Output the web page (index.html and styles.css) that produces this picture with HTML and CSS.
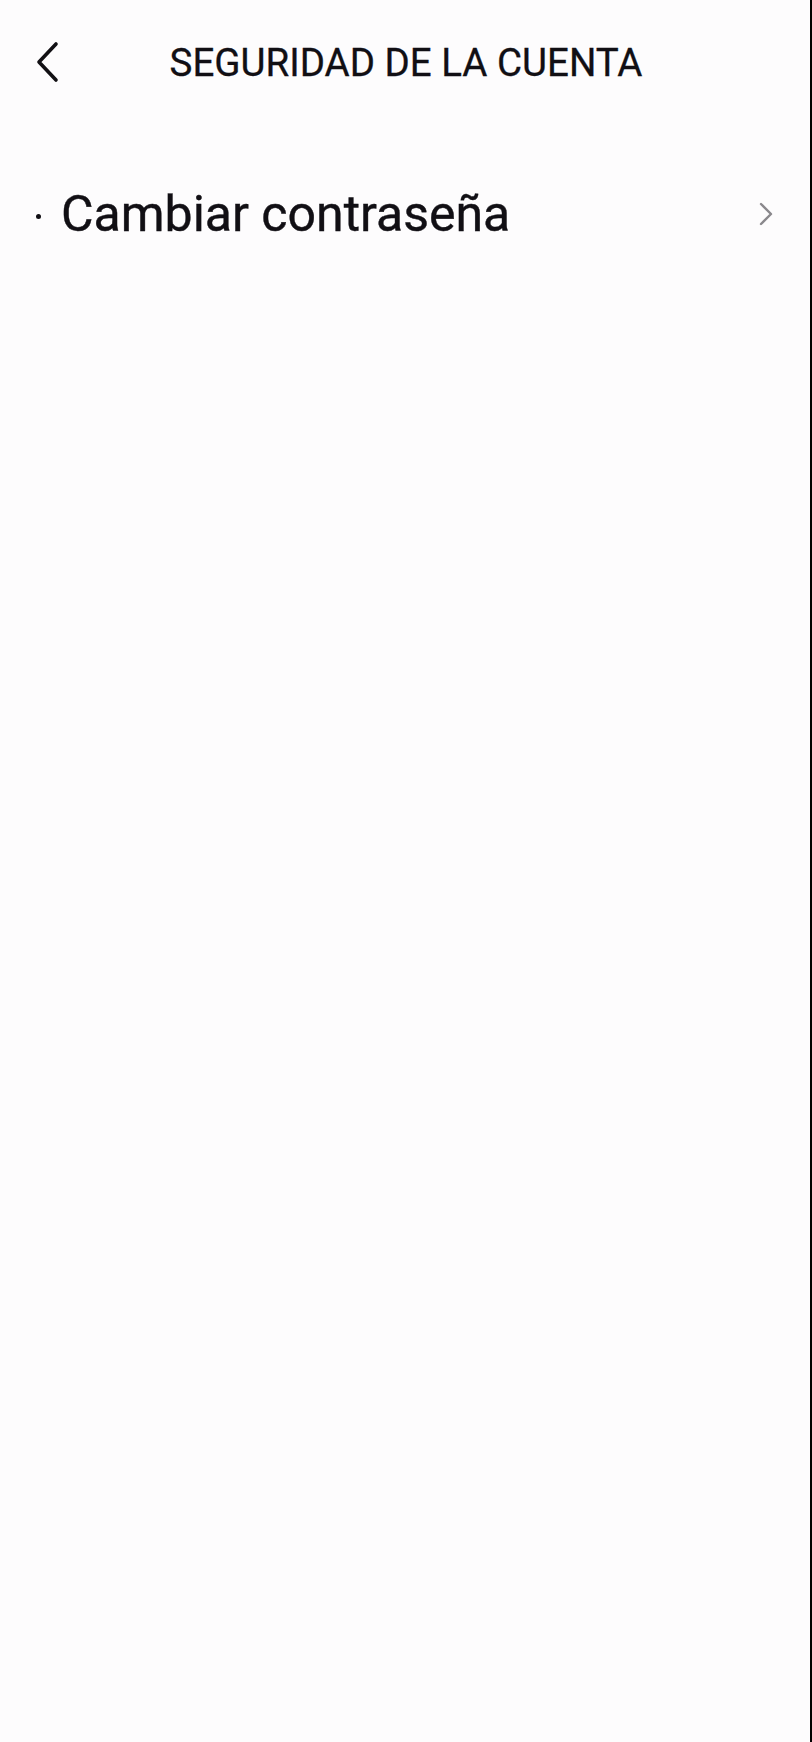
FILE: index.html
```html
<!DOCTYPE html>
<html lang="es">
<head>
<meta charset="utf-8">
<title>Seguridad de la cuenta</title>
<link rel="stylesheet" href="styles.css">
</head>
<body>
<div class="screen">
  <header class="topbar">
    <button class="back" aria-label="Atrás">
      <svg width="40" height="44" viewBox="0 0 40 44"><path d="M29 4 L12 22 L29 40" fill="none" stroke="#121014" stroke-width="3.6" stroke-linecap="round" stroke-linejoin="round"/></svg>
    </button>
    <h1 class="title">SEGURIDAD DE LA CUENTA</h1>
  </header>
  <ul class="menu">
    <li class="item">
      <span class="dot"></span>
      <span class="label">Cambiar contraseña</span>
      <svg class="chev" width="20" height="28" viewBox="0 0 20 28"><path d="M5 4 L15 14 L5 24" fill="none" stroke="#8a888c" stroke-width="2.4" stroke-linecap="round" stroke-linejoin="round"/></svg>
    </li>
  </ul>
</div>
</body>
</html>
```
FILE: styles.css
```css
* { box-sizing: border-box; }
html, body { margin: 0; padding: 0; }
body {
  background: #fdfcfd;
  font-family: Roboto, "Liberation Sans", sans-serif;
  color: #110f14;
}
.screen {
  width: 812px;
  min-height: 1742px;
  border-right: 2px solid #000;
  background: #fdfcfd;
}
.topbar {
  position: relative;
  height: 124px;
  display: flex;
  align-items: center;
  justify-content: center;
}
.back {
  position: absolute;
  left: 27px;
  top: 40px;
  width: 40px;
  height: 44px;
  padding: 0;
  border: 0;
  background: none;
}
.back svg { display: block; }
.title {
  margin: 0;
  font-size: 38.5px;
  font-weight: 400;
  letter-spacing: 0;
  padding-left: 2px;
  -webkit-text-stroke: 0.3px #110f14;
}
.menu {
  list-style: none;
  margin: 0;
  padding: 0;
}
.item {
  display: flex;
  align-items: center;
  height: 180px;
  padding: 0 34px 0 36px;
}
.dot {
  width: 5px;
  height: 5px;
  border-radius: 50%;
  background: #110f14;
  margin-right: 20px;
  margin-top: 4px;
}
.label {
  flex: 1;
  font-size: 50px;
  line-height: 1;
  -webkit-text-stroke: 0.4px #110f14;
}
.chev { flex: none; }
```
